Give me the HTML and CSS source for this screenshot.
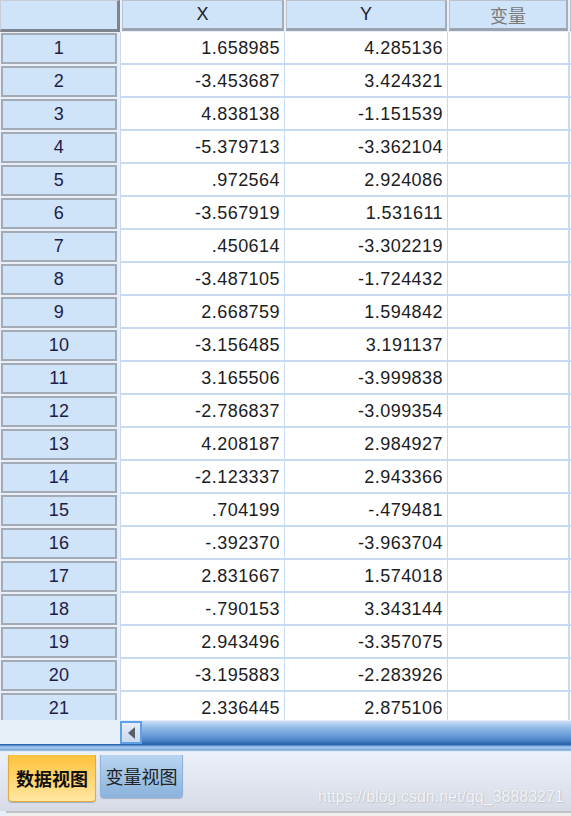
FILE: index.html
```html
<!DOCTYPE html>
<html lang="zh">
<head>
<meta charset="utf-8">
<link rel="stylesheet" href="styles.css">
</head>
<body>
<div class="app">
  <div class="sheet">
    <div class="row head">
      <div class="corner"></div>
      <div class="colhead">X</div>
      <div class="colhead">Y</div>
      <div class="colhead var">变量</div>
      <div class="colhead rest"></div>
    </div>
    <div class="row"><div class="rh">1</div><div class="c">1.658985</div><div class="c">4.285136</div><div class="c"></div><div class="c rest"></div></div>
    <div class="row"><div class="rh">2</div><div class="c">-3.453687</div><div class="c">3.424321</div><div class="c"></div><div class="c rest"></div></div>
    <div class="row"><div class="rh">3</div><div class="c">4.838138</div><div class="c">-1.151539</div><div class="c"></div><div class="c rest"></div></div>
    <div class="row"><div class="rh">4</div><div class="c">-5.379713</div><div class="c">-3.362104</div><div class="c"></div><div class="c rest"></div></div>
    <div class="row"><div class="rh">5</div><div class="c">.972564</div><div class="c">2.924086</div><div class="c"></div><div class="c rest"></div></div>
    <div class="row"><div class="rh">6</div><div class="c">-3.567919</div><div class="c">1.531611</div><div class="c"></div><div class="c rest"></div></div>
    <div class="row"><div class="rh">7</div><div class="c">.450614</div><div class="c">-3.302219</div><div class="c"></div><div class="c rest"></div></div>
    <div class="row"><div class="rh">8</div><div class="c">-3.487105</div><div class="c">-1.724432</div><div class="c"></div><div class="c rest"></div></div>
    <div class="row"><div class="rh">9</div><div class="c">2.668759</div><div class="c">1.594842</div><div class="c"></div><div class="c rest"></div></div>
    <div class="row"><div class="rh">10</div><div class="c">-3.156485</div><div class="c">3.191137</div><div class="c"></div><div class="c rest"></div></div>
    <div class="row"><div class="rh">11</div><div class="c">3.165506</div><div class="c">-3.999838</div><div class="c"></div><div class="c rest"></div></div>
    <div class="row"><div class="rh">12</div><div class="c">-2.786837</div><div class="c">-3.099354</div><div class="c"></div><div class="c rest"></div></div>
    <div class="row"><div class="rh">13</div><div class="c">4.208187</div><div class="c">2.984927</div><div class="c"></div><div class="c rest"></div></div>
    <div class="row"><div class="rh">14</div><div class="c">-2.123337</div><div class="c">2.943366</div><div class="c"></div><div class="c rest"></div></div>
    <div class="row"><div class="rh">15</div><div class="c">.704199</div><div class="c">-.479481</div><div class="c"></div><div class="c rest"></div></div>
    <div class="row"><div class="rh">16</div><div class="c">-.392370</div><div class="c">-3.963704</div><div class="c"></div><div class="c rest"></div></div>
    <div class="row"><div class="rh">17</div><div class="c">2.831667</div><div class="c">1.574018</div><div class="c"></div><div class="c rest"></div></div>
    <div class="row"><div class="rh">18</div><div class="c">-.790153</div><div class="c">3.343144</div><div class="c"></div><div class="c rest"></div></div>
    <div class="row"><div class="rh">19</div><div class="c">2.943496</div><div class="c">-3.357075</div><div class="c"></div><div class="c rest"></div></div>
    <div class="row"><div class="rh">20</div><div class="c">-3.195883</div><div class="c">-2.283926</div><div class="c"></div><div class="c rest"></div></div>
    <div class="row"><div class="rh">21</div><div class="c">2.336445</div><div class="c">2.875106</div><div class="c"></div><div class="c rest"></div></div>
  </div>
  <div class="hscroll">
    <div class="hs-gap"></div>
    <div class="hs-btn"><span class="arrow"></span></div>
    <div class="hs-thumb"></div>
  </div>
  <div class="divider"></div>
  <div class="tabbar">
    <div class="tab active">数据视图</div>
    <div class="tab">变量视图</div>
    <div class="watermark">https://blog.csdn.net/qq_38883271</div>
  </div>
  <div class="status"></div>
</div>
</body>
</html>
```

FILE: styles.css
```css
html, body {
  margin: 0;
  padding: 0;
}
body {
  width: 571px;
  height: 816px;
  overflow: hidden;
  background: #e9eff8;
  font-family: "Liberation Sans", Arial, "Noto Sans CJK SC", sans-serif;
}
.app {
  display: flex;
  flex-direction: column;
  height: 816px;
}
.sheet {
  height: 720px;
  overflow: hidden;
  flex: none;
  background: #e9eff8;
}
.row {
  display: grid;
  grid-template-columns: 120px 164px 163px 121px 1fr;
  height: 33px;
}
.row.head {
  height: 32px;
}
.corner {
  background: #cfe3f9;
  border-right: 3px solid #7d8590;
  border-bottom: 3px solid #7d8590;
  box-sizing: border-box;
  border-top: 1px solid #c6cdd6;
  border-left: 1px solid #c6cdd6;
}
.colhead {
  background: #cfe3f9;
  margin: 0 0 1px 2px;
  border: 1px solid #b9c2cd;
  border-bottom: 3px solid #9aa3ae;
  border-right: 2px solid #a4adb8;
  box-sizing: border-box;
  display: flex;
  align-items: center;
  justify-content: center;
  font-size: 18px;
  color: #1c1c2c;
}
.colhead.var {
  color: #7a7a7a;
  font-family: "Noto Sans CJK SC", sans-serif;
  font-size: 18px;
}
.rh {
  background: #cfe3f9;
  margin: 1px 3px 1px 1px;
  border: 2px solid #a3abb6;
  box-sizing: border-box;
  display: flex;
  align-items: center;
  justify-content: center;
  font-size: 18px;
  letter-spacing: 0.3px;
  color: #1e1c48;
}
.c {
  background: #ffffff;
  border-left: 1px solid #c7daf1;
  border-bottom: 2px solid #c7daf1;
  box-sizing: border-box;
  display: flex;
  align-items: center;
  justify-content: flex-end;
  padding-right: 4px;
  padding-top: 1px;
  font-size: 18px;
  letter-spacing: 0.45px;
  color: #1c1c22;
}
.c.rest {
  border-left: 2px solid #c7daf1;
}
.hscroll {
  height: 24px;
  flex: none;
  display: flex;
  background: #e7eff9;
}
.hs-gap {
  width: 120px;
}
.hs-btn {
  width: 22px;
  box-sizing: border-box;
  border: 2px solid #5ea0ea;
  background: linear-gradient(#e6eef8, #c9d9ee);
  display: flex;
  align-items: center;
  justify-content: center;
  margin-top: 1px;
}
.arrow {
  width: 0;
  height: 0;
  border-top: 6px solid transparent;
  border-bottom: 6px solid transparent;
  border-right: 7px solid #5a5e66;
}
.hs-thumb {
  flex: 1;
  margin-top: 1px;
  background: linear-gradient(#c9def4 0%, #8fb9e6 30%, #6d9fd8 60%, #4b84c8 85%, #2c63ab 100%);
}
.divider {
  height: 8px;
  flex: none;
  background: linear-gradient(#2e66ad 0, #2e66ad 1px, #7fb0e4 2px, #a9ccef 4px, #6e9ed4 6px, #c8dcf2 7px, #f1f5fb 8px);
}
.tabbar {
  position: relative;
  height: 59px;
  flex: none;
  background: linear-gradient(#ebf0f9, #d7dbe6);
  display: flex;
  align-items: flex-start;
  gap: 4px;
  padding: 3px 0 0 8px;
  box-sizing: border-box;
}
.tab {
  font-family: "Noto Sans CJK SC", sans-serif;
  font-size: 18px;
  line-height: 1;
  color: #222;
  border-radius: 0 0 4px 4px;
  box-sizing: border-box;
  display: flex;
  align-items: center;
  justify-content: center;
  height: 43px;
  width: 83px;
  background: linear-gradient(#b9d4f0, #8bb3dc);
  border: 1px solid #8fb2d8;
  border-top: none;
  box-shadow: 0 1px 1px rgba(80, 110, 150, 0.4);
}
.tab.active {
  width: 88px;
  height: 47px;
  font-weight: bold;
  color: #111;
  background: linear-gradient(#ffc23a, #ffe7a2);
  border: 1px solid #e1aa3a;
  border-top: none;
}
.watermark {
  position: absolute;
  left: 318px;
  top: 36px;
  font-size: 15.8px;
  color: rgba(255, 255, 255, 0.85);
  text-shadow: 0 0 1px #b8bcc6, 1px 1px 1px #c4c8d0;
  letter-spacing: 0.1px;
}
.status {
  flex: 1;
  background: #f0f0f0;
  border-top: 2px solid #bfc3c9;
  margin-left: 6px;
}
```
